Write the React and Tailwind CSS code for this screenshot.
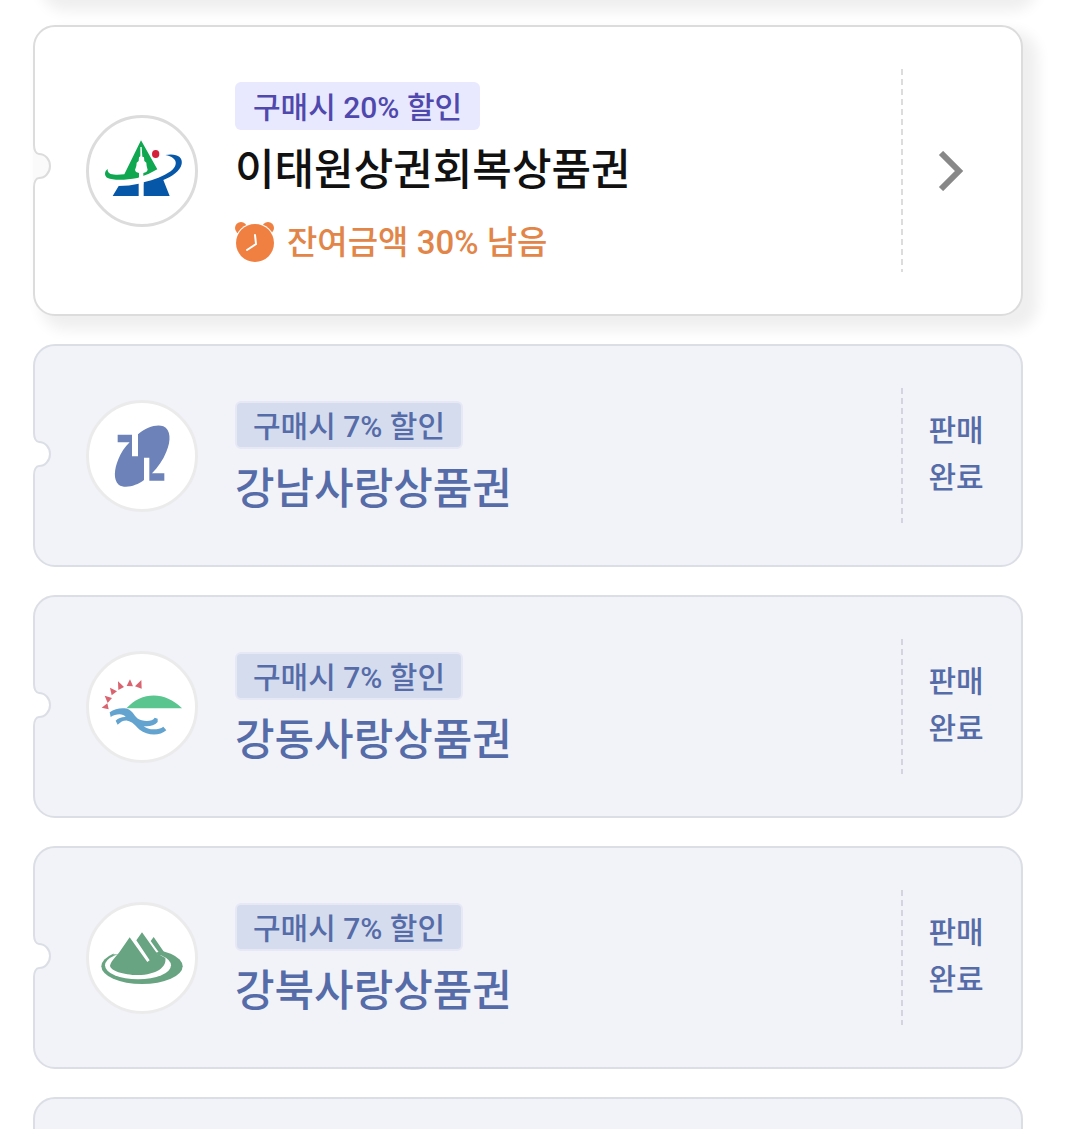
import React from 'react';

const YongsanLogo = () => (
  <svg viewBox="27 36 318 318" className="h-full w-full" aria-hidden="true">
    <path
      d="M183 103 L232 190 Q205 207 172 216 C135 223 98 223 83 216 C72 210 73 196 83 189 C82 202 92 207 112 206 L133 205 Z"
      fill="#0fa750"
    />
    <path
      d="M256 147 C290 141 309 153 305 174 C300 196 277 211 250 222 L269 270 L191 270 L191 229 C223 222 250 211 272 196 C293 180 297 155 256 147 Z"
      fill="#0657a8"
    />
    <path d="M98 270 L116 240 Q148 240 176 233 L176 270 Z" fill="#0657a8" />
    <path
      d="M181 123 L185 123 L187 152 L192 154 L193 165 L199 170 L200 180 L203 192 L199 198 L190 201 L190 235 L177 235 L177 201 L168 198 L165 192 L169 180 L170 170 L176 165 L177 154 L181 151 Z"
      fill="white"
    />
    <ellipse cx="227" cy="144" rx="11" ry="12" fill="#d5203a" />
  </svg>
);

const GangnamLogo = () => (
  <svg viewBox="208 187 318 318" className="h-full w-full" aria-hidden="true">
    <path
      d="M294 282 H337 V347 H355 V281 C380 260 410 250 431 257 C453 266 455 300 440 333 C430 359 414 380 397 398 H434 V420 H389 V351 H373 V418 C350 436 315 445 297 432 C280 417 284 385 296 356 C304 336 315 320 330 305 H294 Z"
      fill="#6c82b9"
    />
  </svg>
);

const RAYS = [
  'M66 203 L83 190 L87 208 Z',
  'M75 167 L97 174 L84 189 Z',
  'M91 143 L112 154 L96 166 Z',
  'M115 124 L133 141 L116 150 Z',
  'M151 118 L160 139 L141 138 Z',
  'M185 120 L186 146 L166 139 Z',
];

const GangdongLogo = () => (
  <svg viewBox="28 42 318 318" className="h-full w-full" aria-hidden="true">
    {RAYS.map((d) => (
      <path key={d} d={d} fill="#d9636f" />
    ))}
    <path d="M140 205 C185 155 255 152 307 205 Z" fill="#5bc58f" />
    <path
      d="M90 217 C108 204 134 202 149 209 C163 217 166 236 186 241 C204 245 220 242 225 233 L234 236 L234 246 C224 258 206 260 192 258 C205 271 236 271 251 260 L260 271 C240 289 202 287 180 269 C167 257 158 244 143 242 C130 241 124 246 114 254 L108 242 C116 234 128 230 138 231 C130 219 108 221 93 231 Z"
      fill="#63a3d0"
    />
  </svg>
);

const GangbukLogo = () => (
  <svg viewBox="28 30 318 318" className="h-full w-full" aria-hidden="true">
    <ellipse cx="187" cy="214" rx="122" ry="53" fill="#68a481" />
    <ellipse cx="175" cy="211" rx="99" ry="42" fill="white" />
    <path d="M100 178 L119 155 L225 122 L252 166 L200 182 Z" fill="white" />
    <path
      d="M150 127 L167 151 L203 201 L210 196 L170 136 L187 112 L234 178 L239 174 L213 138 L222 126 L253 171 L242 181 L257 189 C262 216 230 240 175 240 C130 240 92 226 91 212 C95 196 112 181 120 170 Z"
      fill="#68a481"
    />
  </svg>
);

const AlarmIcon = () => (
  <svg viewBox="0 0 40 42" className="h-[42px] w-10 shrink-0" aria-hidden="true">
    <circle cx="6" cy="7" r="6" fill="#f08041" />
    <circle cx="33" cy="7" r="6" fill="#f08041" />
    <circle cx="20" cy="22" r="20" fill="white" />
    <circle cx="20" cy="22" r="19" fill="#f08041" />
    <path d="M20 14 L21 23 L12 29" fill="none" stroke="white" strokeWidth="2" strokeLinecap="round" />
  </svg>
);

// half-round bite on the ticket's left edge
const Notch = ({ soldOut }) => (
  <svg
    viewBox="0 0 18 46"
    className={`absolute top-1/2 -left-0.5 h-[46px] w-[18px] ${soldOut ? '-mt-[25px]' : '-mt-7'}`}
    aria-hidden="true"
  >
    <path
      d="M0 0 H1 V2 C1 7 3 11 6 11 A11 12 0 0 1 6 35 C3 35 1 39 1 44 V46 H0 Z"
      fill={soldOut ? '#ffffff' : '#fafafa'}
    />
    <path
      d="M1 0 V2 C1 7 3 11 6 11 A11 12 0 0 1 6 35 C3 35 1 39 1 44 V46"
      fill="none"
      stroke={soldOut ? '#dcdee6' : '#dcdcdc'}
      strokeWidth="2"
    />
  </svg>
);

const vouchers = [
  { name: '이태원상권회복상품권', discount: '구매시 20% 할인', remaining: '잔여금액 30% 남음', Logo: YongsanLogo },
  { name: '강남사랑상품권', discount: '구매시 7% 할인', soldOut: true, Logo: GangnamLogo },
  { name: '강동사랑상품권', discount: '구매시 7% 할인', soldOut: true, Logo: GangdongLogo },
  { name: '강북사랑상품권', discount: '구매시 7% 할인', soldOut: true, Logo: GangbukLogo },
];

const activeCard = 'border-[#dcdcdc] bg-white shadow-[11px_10px_14px_4px_#efefef]';
const soldOutCard = 'border-[#dcdee6] bg-[#f2f3f8]';

function VoucherCard({ name, discount, remaining, soldOut, Logo }) {
  const Tag = soldOut ? 'div' : 'a';

  return (
    <Tag
      href={soldOut ? undefined : '#purchase'}
      className={`relative flex shrink-0 rounded-[22px] border-2 ${soldOut ? soldOutCard : activeCard}`}
    >
      <Notch soldOut={soldOut} />
      <div
        className={`ml-[51px] h-28 w-28 shrink-0 self-center overflow-hidden rounded-full border-3 bg-white ${
          soldOut ? 'border-[#ebebeb]' : 'border-[#dcdcdc]'
        }`}
      >
        <Logo />
      </div>

      <div className="ml-[37px] min-w-0 flex-1 pt-[55px] pb-11">
        <span
          className={`flex h-12 w-fit items-center rounded-md pt-1 text-[30px] leading-none font-medium whitespace-nowrap ${
            soldOut
              ? 'border-2 border-[#e6e8f6] bg-[#d5dcee] px-4 text-[#566ca8]'
              : 'bg-[#e8e8ff] px-[18px] text-[#5049ad]'
          }`}
        >
          {discount}
        </span>
        <h2
          className={`mt-2 text-[43px] leading-[64px] font-medium whitespace-nowrap ${
            soldOut ? 'text-[#566ca8]' : 'text-[#111111]'
          }`}
        >
          {name}
        </h2>
        {remaining && (
          <p className="mt-3 flex h-14 items-center gap-3 text-[33px] leading-none font-medium whitespace-nowrap text-[#e28549]">
            <AlarmIcon />
            {remaining}
          </p>
        )}
      </div>

      <div
        className={`my-[42px] w-0.5 shrink-0 ${
          soldOut
            ? 'bg-[repeating-linear-gradient(to_bottom,#d3d4e0_0_6px,transparent_6px_10px)]'
            : 'bg-[repeating-linear-gradient(to_bottom,#dcdcdc_0_6px,transparent_6px_10px)]'
        }`}
      />
      <div className="mr-3 flex w-[106px] shrink-0 items-center justify-center">
        {soldOut ? (
          <p className="pb-1 text-center text-[30px] leading-[47px] font-medium whitespace-nowrap text-[#566ca8]">
            판매
            <br />
            완료
          </p>
        ) : (
          <svg viewBox="0 0 36 40" className="h-10 w-9" aria-label="구매하기">
            <path d="M3 2 L21 20 L3 38" fill="none" stroke="#888888" strokeWidth="6" />
          </svg>
        )}
      </div>
    </Tag>
  );
}

export default function App() {
  return (
    <main className="flex h-screen flex-col gap-7 overflow-hidden bg-white pr-[45px] pl-[33px] font-[Roboto,'Noto_Sans_CJK_KR',sans-serif]">
      {/* tail of the card scrolled past the top */}
      <div className={`-mt-[67px] h-16 shrink-0 rounded-[22px] border-2 ${activeCard}`} />
      {vouchers.map((voucher) => (
        <VoucherCard key={voucher.name} {...voucher} />
      ))}
      <div className={`h-[223px] shrink-0 rounded-[22px] border-2 ${soldOutCard}`} />
    </main>
  );
}
